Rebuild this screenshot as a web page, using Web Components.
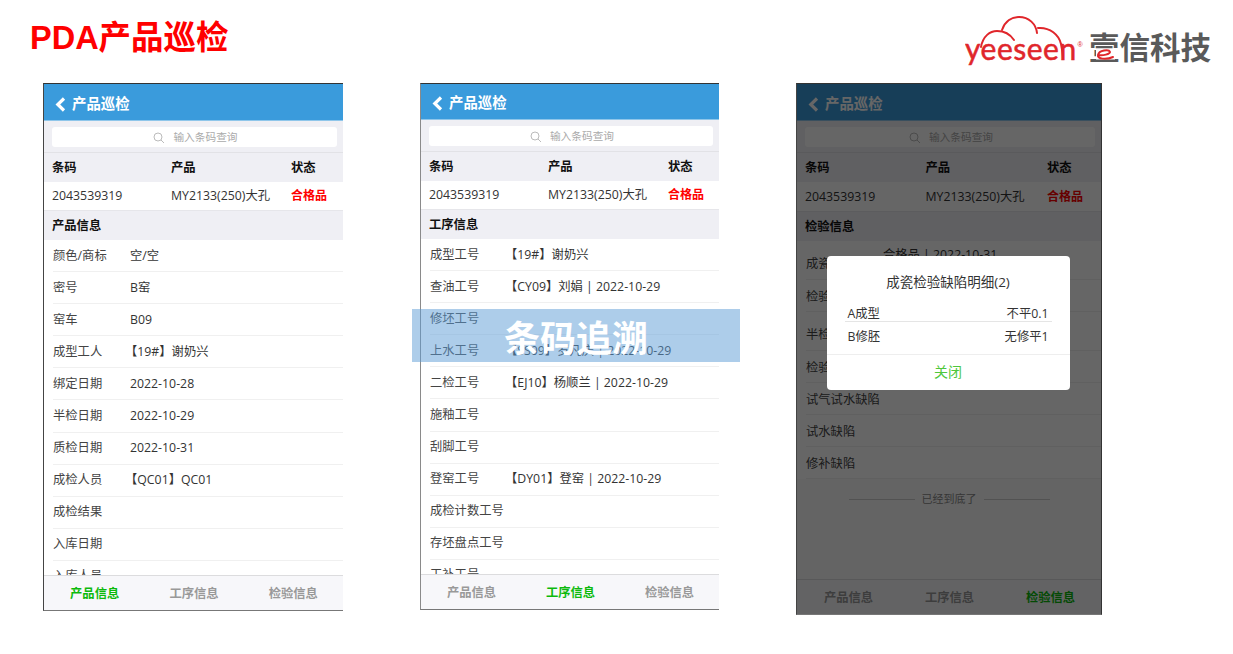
<!DOCTYPE html>
<html lang="zh">
<head>
<meta charset="utf-8">
<title>PDA产品巡检</title>
<style>
  html, body { margin: 0; padding: 0; background: #fff; }
  body { font-family: "Open Sans", "Noto Sans CJK SC", sans-serif; }
</style>
</head>
<body>
<slide-page>
  <span slot="title">PDA产品巡检</span>

  <pda-phone section="产品信息" active="0" style="--w:300px;--h:528px;--head:36px;--right:0;--c2:119px;--c3:120px">
    <info-row label="颜色/商标" value="空/空"></info-row>
    <info-row label="密号" value="B窑"></info-row>
    <info-row label="窑车" value="B09"></info-row>
    <info-row label="成型工人" value="【19#】谢奶兴" bracket></info-row>
    <info-row label="绑定日期" value="2022-10-28"></info-row>
    <info-row label="半检日期" value="2022-10-29"></info-row>
    <info-row label="质检日期" value="2022-10-31"></info-row>
    <info-row label="成检人员" value="【QC01】QC01" bracket></info-row>
    <info-row label="成检结果"></info-row>
    <info-row label="入库日期"></info-row>
    <info-row label="入库人员"></info-row>
  </pda-phone>

  <pda-phone section="工序信息" active="1" style="--w:299px;--h:527px;--head:35px;--right:0;--c2:119px;--c3:120px;--col:80px;--left-line:#8a8a8a">
    <info-row label="成型工号" value="【19#】谢奶兴" bracket></info-row>
    <info-row label="查油工号" value="【CY09】刘娟 | 2022-10-29" bracket></info-row>
    <info-row label="修坯工号"></info-row>
    <info-row label="上水工号" value="【SS09】罗凡庆 | 2022-10-29" bracket></info-row>
    <info-row label="二检工号" value="【EJ10】杨顺兰 | 2022-10-29" bracket></info-row>
    <info-row label="施釉工号"></info-row>
    <info-row label="刮脚工号"></info-row>
    <info-row label="登窑工号" value="【DY01】登窑 | 2022-10-29" bracket></info-row>
    <info-row label="成检计数工号"></info-row>
    <info-row label="存坯盘点工号"></info-row>
    <info-row label="工补工号"></info-row>
  </pda-phone>

  <pda-phone section="检验信息" active="2" style="--w:306px;--h:532px;--head:36px;--right:1px;--c2:120.5px;--c3:121.5px;--head-row:29px;--body-row:29px;--sect:30px;--label-pad:2px;--list-bg:#fafafa">
    <info-row label="成瓷结果" value="合格品 | 2022-10-31" tall></info-row>
    <info-row label="检验人员"></info-row>
    <info-row label="半检结果" tall></info-row>
    <info-row label="检验日期"></info-row>
    <info-row label="试气试水缺陷"></info-row>
    <info-row label="试水缺陷"></info-row>
    <info-row label="修补缺陷"></info-row>
    <end-line>已经到底了</end-line>
    <defect-dialog slot="overlay" heading="成瓷检验缺陷明细(2)">
      <defect-row name="A成型" value="不平0.1"></defect-row>
      <defect-row name="B修胚" value="无修平1"></defect-row>
    </defect-dialog>
  </pda-phone>

  <span slot="banner">条码追溯</span>
</slide-page>

<script>
// page frame: title + logo on top, the three phones below
class SlidePage extends HTMLElement {
  constructor() {
    super();
    this.attachShadow({ mode: 'open' });
    this.shadowRoot.innerHTML = `
      <style>
        :host { display: block; position: relative; width: 1233px; height: 654px; overflow: hidden; }
        .top { height: 83px; display: flex; justify-content: space-between; }
        .title { margin: 19px 0 0 30px; font: bold 32.5px/38px "Liberation Sans", "Noto Sans CJK SC", sans-serif; color: #f00; }
        .phones { display: flex; align-items: flex-start; gap: 77px; padding-left: 43px; }
        .banner {
          position: absolute; left: 412px; top: 309px; width: 328px; height: 53px; box-sizing: border-box; padding-top: 1px;
          display: flex; align-items: center; justify-content: center;
          background: rgba(91, 155, 213, .5); color: #fff;
          font: bold 36px/1 "Noto Sans CJK SC", sans-serif;
        }
        brand-logo { margin: 15px 21px 0 0; }
      </style>
      <div class="top">
        <div class="title"><slot name="title"></slot></div>
        <brand-logo></brand-logo>
      </div>
      <div class="phones"><slot></slot></div>
      <div class="banner"><slot name="banner"></slot></div>`;
  }
}

class BrandLogo extends HTMLElement {
  constructor() {
    super();
    this.attachShadow({ mode: 'open' });
    this.shadowRoot.innerHTML = `
      <style>
        :host { display: block; width: 247px; height: 60px; }
        svg { display: block; }
      </style>
      <svg width="247" height="60" viewBox="966 15 247 60">
        <g fill="none" stroke="#e0262b" stroke-width="2" stroke-linecap="round">
          <path d="M982 47C984 36 991 31 998 31C1005 31 1011 34 1015 40"/>
          <path d="M1003 30C1006 21 1013 17 1020 17C1030 17 1037 24 1038 33"/>
          <path d="M1039 28C1051 27 1060 35 1062 44C1063 49 1064 54 1064 58"/>
        </g>
        <text x="966" y="60" font-family="Lato, 'Liberation Sans', sans-serif" font-size="30" letter-spacing=".5" stroke="#e0262b" stroke-width=".5" fill="#e0262b">yeeseen</text>
        <text x="1078.5" y="47" font-family="'Liberation Sans', sans-serif" font-size="7" fill="#e0262b">®</text>
        <text x="1090" y="59" font-family="'Noto Sans CJK SC', sans-serif" font-weight="700" font-size="30.5" fill="#5a5a5a">壹信科技</text>
        <rect x="1097" y="49" width="19" height="10.5" fill="#fff"/>
        <path d="M1099 55C1104 56 1111 54 1111 52C1110 49 1100 50 1099 55C1098 59 1107 60 1114 57" fill="none" stroke="#e0262b" stroke-width="2" stroke-linecap="round"/>
      </svg>`;
  }
}

const tabNames = ['产品信息', '工序信息', '检验信息'];
const phoneTemplate = document.createElement('template');
phoneTemplate.innerHTML = `
  <style>
    :host {
      display: block; position: relative; flex: none; box-sizing: border-box; overflow: hidden;
      width: var(--w); height: var(--h);
      border-top: 1px solid #333; border-left: 1px solid var(--left-line, #444);
      border-right: var(--right) solid #333; border-bottom: 1px solid #777;
      background: #fff; color: #333;
      font: 12.3px/1.3 "Open Sans", "Noto Sans CJK SC", sans-serif;
    }
    .app { height: 100%; display: flex; flex-direction: column; }
    header {
      flex: none; height: var(--head); box-sizing: content-box; display: flex; align-items: center; gap: 6px; padding-left: 11px;
      background: #3a9bdc; color: #fff; font-weight: 700; font-size: 14.4px;
      border-bottom: 1px solid #8fc6ea;
    }
    header span { padding-top: 4px; }
    header svg { margin-top: 4px; }
    .search { flex: none; height: 32px; box-sizing: border-box; padding: 6px 6px 6px 8px; background: #efeff4; border-bottom: 1px solid #e2e2e6; }
    .box {
      height: 20px; box-sizing: border-box; padding: 2px 0 0 2px; background: #fff; border-radius: 3px; display: flex; align-items: center; justify-content: center;
      gap: 8px; color: #aaa; font-size: 10.7px;
    }
    .grid { flex: none; display: grid; grid-template-columns: var(--c2) var(--c3) 1fr; padding-left: 8px; align-items: center; }
    .thead { height: var(--head-row, 29px); background: #efeff4; color: #111; font-weight: 700; }
    .tbody { height: var(--body-row, 28px); background: #fff; }
    .red { color: #f00; font-weight: 700; font-size: 12px; }
    .section { flex: none; height: var(--sect, 30px); display: flex; align-items: center; padding-left: 8px; background: #efeff4; color: #111; font-weight: 700; border-top: 1px solid #e6e6ea; box-sizing: border-box; }
    .list { flex: 1; min-height: 0; overflow: hidden; background: var(--list-bg, #fff); }
    .tabs {
      flex: none; height: 35px; box-sizing: border-box; padding: 1px 0 0 1px; display: grid; grid-template-columns: repeat(3, 1fr); align-items: center; justify-items: center;
      background: #f7f7fa; border-top: 1px solid #dcdcde; color: #999; font-weight: 700;
    }
    .tabs .on { color: #0cba0c; }
  </style>
  <div class="app">
    <header>
      <svg width="11" height="15" viewBox="0 0 11 15"><path d="M9 1.5 2.8 7.5 9 13.5" fill="none" stroke="#fff" stroke-width="3.2"/></svg>
      <span>产品巡检</span>
    </header>
    <div class="search"><div class="box">
      <svg width="12" height="12" viewBox="0 0 12 12"><circle cx="5" cy="5" r="4" fill="none" stroke="#bbb"/><path d="M8 8 11 11" stroke="#bbb"/></svg>
      <span>输入条码查询</span>
    </div></div>
    <div class="grid thead"><span>条码</span><span>产品</span><span>状态</span></div>
    <div class="grid tbody"><span>2043539319</span><span>MY2133(250)大孔</span><span class="red">合格品</span></div>
    <div class="section"></div>
    <div class="list"><slot></slot></div>
    <nav class="tabs"></nav>
  </div>
  <slot name="overlay"></slot>`;

class PdaPhone extends HTMLElement {
  constructor() {
    super();
    this.attachShadow({ mode: 'open' });
    this.shadowRoot.appendChild(phoneTemplate.content.cloneNode(true));
  }

  connectedCallback() {
    this.shadowRoot.querySelector('.section').textContent = this.getAttribute('section');
    const active = Number(this.getAttribute('active'));
    this.shadowRoot.querySelector('.tabs').innerHTML = tabNames
      .map((name, i) => `<span class="${i === active ? 'on' : ''}">${name}</span>`)
      .join('');
  }
}

class InfoRow extends HTMLElement {
  constructor() {
    super();
    this.attachShadow({ mode: 'open' });
    this.shadowRoot.innerHTML = `
      <style>
        :host { display: block; padding-left: 9px; background: #fff; }
        .row {
          height: 31.1px; display: flex; align-items: center;
          border-bottom: 1px solid #f0f0f0; color: #444;
        }
        .label { width: var(--col, 77px); flex: none; padding-top: var(--label-pad, 0); }
        .value { color: #333; white-space: nowrap; }
        :host([bracket]) .value { margin-left: -5px; }
        :host([tall]) .row { height: 38px; }
        :host([tall]) .label { padding-top: 7px; }
        :host([tall]) .value { margin-bottom: 11px; }
      </style>
      <div class="row"><span class="label"></span><span class="value"></span></div>`;
  }

  connectedCallback() {
    this.shadowRoot.querySelector('.label').textContent = this.getAttribute('label');
    this.shadowRoot.querySelector('.value').textContent = this.getAttribute('value') || '';
  }
}

class EndLine extends HTMLElement {
  constructor() {
    super();
    this.attachShadow({ mode: 'open' });
    this.shadowRoot.innerHTML = `
      <style>
        :host { display: flex; align-items: center; justify-content: center; gap: 7px; height: 40px; color: #888; font-size: 11px; }
        i { width: 66px; height: 1px; background: #ccc; }
      </style>
      <i></i><slot></slot><i></i>`;
  }
}

class DefectDialog extends HTMLElement {
  constructor() {
    super();
    this.attachShadow({ mode: 'open' });
    this.shadowRoot.innerHTML = `
      <style>
        :host {
          position: absolute; inset: 0; display: flex; justify-content: center; align-items: flex-start;
          background: rgba(0, 0, 0, .6);
        }
        .card {
          width: 243px; margin: 172px 2px 0 0; background: #fff; border-radius: 4px; color: #333;
          display: flex; flex-direction: column;
        }
        h2 { margin: 0; height: 34px; padding-top: 10px; display: flex; align-items: center; justify-content: center; font-size: 13.5px; font-weight: 400; }
        .lines { padding: 0 18px; height: 54px; }
        .close {
          height: 35px; display: flex; align-items: center; justify-content: center;
          border-top: 1px solid #eee; color: #4ec73b; font-size: 14px;
        }
      </style>
      <div class="card">
        <h2></h2>
        <div class="lines"><slot></slot></div>
        <div class="close">关闭</div>
      </div>`;
  }

  connectedCallback() {
    this.shadowRoot.querySelector('h2').textContent = this.getAttribute('heading');
  }
}

class DefectRow extends HTMLElement {
  constructor() {
    super();
    this.attachShadow({ mode: 'open' });
    this.shadowRoot.innerHTML = `
      <style>
        :host { display: flex; box-sizing: border-box; justify-content: space-between; align-items: center; height: 22px; padding: 6px 3px 0; border-bottom: 1px solid #e5e5e5; font-size: 12.3px; }
        :host(:last-child) { border-bottom: 0; height: 30px; padding-top: 0; }
      </style>
      <span></span><span></span>`;
  }

  connectedCallback() {
    const spans = this.shadowRoot.querySelectorAll('span');
    spans[0].textContent = this.getAttribute('name');
    spans[1].textContent = this.getAttribute('value');
  }
}

customElements.define('slide-page', SlidePage);
customElements.define('brand-logo', BrandLogo);
customElements.define('pda-phone', PdaPhone);
customElements.define('info-row', InfoRow);
customElements.define('end-line', EndLine);
customElements.define('defect-dialog', DefectDialog);
customElements.define('defect-row', DefectRow);
</script>
</body>
</html>
